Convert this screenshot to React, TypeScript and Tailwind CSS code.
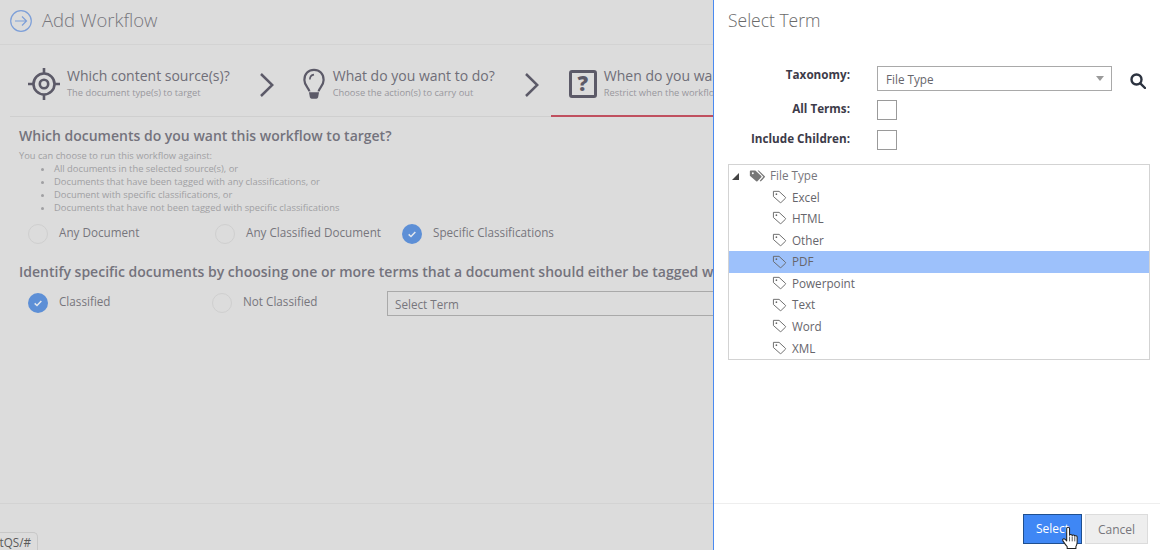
const font = "[font-family:'Open_Sans',sans-serif]";

function Tag({ className = "" }: { className?: string }) {
  return (
    <svg viewBox="0 0 16 16" className={className} fill="none" stroke="#666" strokeWidth="1">
      <path d="M1.5 2.5h6l6.8 6.3a.8.8 0 0 1 0 1.1l-4.6 4.4a.8.8 0 0 1-1.1 0L1.5 8z" strokeLinejoin="round" />
      <circle cx="4.7" cy="5.5" r="0.9" fill="#666" stroke="none" />
    </svg>
  );
}

function Tags({ className = "" }: { className?: string }) {
  return (
    <svg viewBox="0 0 20 16" className={className} fill="#777">
      <path d="M1 2.5a1 1 0 0 1 1-1h5.5l7 6.5a1 1 0 0 1 0 1.4l-4.6 4.8a1 1 0 0 1-1.4 0L1 7.800z" />
      <path d="M10 1.500h1.500l7 6.700a1 1 0 0 1 0 1.400l-4.700 5-1.200-1 4.300-4.700z" />
      <circle cx="4.500" cy="4.800" r="1.100" fill="#fff" />
    </svg>
  );
}

function Chevron() {
  return (
    <svg viewBox="0 0 14 24" className="w-[14px] h-[24px] shrink-0 mt-[3px]">
      <path d="M1 1l11.300 11L1 23" fill="none" stroke="#5c5a68" strokeWidth="2.500" />
    </svg>
  );
}

function Target() {
  return (
    <svg viewBox="0 0 32 32" className="w-[32px] h-[32px] shrink-0" fill="none" stroke="#5c5a68">
      <circle cx="16" cy="16" r="10.500" strokeWidth="2.600" />
      <circle cx="16" cy="16" r="4.200" strokeWidth="2.600" />
      <path d="M16 0v6M16 26v6M0 16h6M26 16h6" strokeWidth="2.600" />
    </svg>
  );
}

function Bulb() {
  return (
    <svg viewBox="0 0 24 34" className="w-[22px] h-[32px] shrink-0" fill="none" stroke="#5c5a68">
      <path d="M7 25c-.5-3.500-5.500-6-5.500-12.500C1.500 6 6 1.500 12 1.500S22.500 6 22.500 12.500C22.500 19 17.500 21.500 17 25" strokeWidth="2.400" />
      <path d="M7.500 12c0-3 1.800-4.800 4.500-5.200" strokeWidth="1.800" />
      <path d="M6.500 26h11l-1 5.500a2 2 0 0 1-2 1.500h-5a2 2 0 0 1-2-1.500z" fill="#5c5a68" stroke="none" />
    </svg>
  );
}

function Question() {
  return (
    <div className="w-[28px] h-[28px] shrink-0 rounded-[3px] border-[3px] border-[#5c5a68] flex items-center justify-center text-[21px] font-extrabold leading-none text-[#5c5a68]">
      ?
    </div>
  );
}

function Step({ icon, title, sub, gap }: { icon: React.ReactNode; title: string; sub: string; gap: string }) {
  return (
    <div className={`flex items-center shrink-0 ${gap}`}>
      {icon}
      <div className="whitespace-nowrap -mt-[2px]">
        <div className="text-[14px] leading-[20px] text-[#6f6e78]">{title}</div>
        <div className="text-[9.300px] leading-[13px] text-[#98979d]">{sub}</div>
      </div>
    </div>
  );
}

function Radio({ on, label, className = "" }: { on?: boolean; label: string; className?: string }) {
  return (
    <div className={`flex items-start shrink-0 ${className}`}>
      {on ? (
        <div className="w-[20px] h-[20px] rounded-full bg-[#5d8fd6] flex items-center justify-center shrink-0">
          <svg viewBox="0 0 12 12" className="w-[10px] h-[10px]">
            <path d="M2 6.500l2.800 2.500L10 3.500" fill="none" stroke="#e4e8ee" strokeWidth="1.800" />
          </svg>
        </div>
      ) : (
        <div className="w-[20px] h-[20px] rounded-full border border-[#cfcfcf] shrink-0" />
      )}
      <span className="ml-[11px] -mt-[1px] text-[11.700px] leading-[18px] text-[#77767c] whitespace-nowrap">{label}</span>
    </div>
  );
}

const terms = ["Excel", "HTML", "Other", "PDF", "Powerpoint", "Text", "Word", "XML"];

export default function App() {
  return (
    <div className={`${font} relative flex w-[1160px] h-[550px] overflow-hidden bg-white`}>
      <div className="w-[714px] h-full shrink-0 overflow-hidden bg-[#dcdcdc] border-r border-r-[#4a8af0] flex flex-col">
        <div className="h-[45px] shrink-0 border-b border-[#d3d3d3] flex items-center pl-[10px] pb-[4px] gap-[10px]">
          <svg viewBox="0 0 22 22" className="w-[22px] h-[22px] shrink-0 mt-[2px]" fill="none" stroke="#7d9fd8" strokeWidth="1.200">
            <circle cx="11" cy="11" r="10.300" />
            <path d="M5 11h11.500M12 6.500l4.500 4.500-4.500 4.500" />
          </svg>
          <span className="text-[18.500px] font-light text-[#77767c] whitespace-nowrap">Add Workflow</span>
        </div>

        <div className="h-[72px] shrink-0 border-b border-[#cfcfcf] ml-[10px] flex items-center pl-[18px] pt-[6px] relative">
          <Step icon={<Target />} title="Which content source(s)?" sub="The document type(s) to target" gap="gap-[7px]" />
          <div className="ml-[30px] mr-[29px] flex"><Chevron /></div>
          <Step icon={<Bulb />} title="What do you want to do?" sub="Choose the action(s) to carry out" gap="gap-[8px]" />
          <div className="ml-[30px] mr-[30px] flex"><Chevron /></div>
          <Step icon={<Question />} title="When do you want to run?" sub="Restrict when the workflow runs" gap="gap-[7px]" />
          <div className="absolute left-[541px] w-[172px] bottom-[-1px] h-[2px] bg-[#c0505f]" />
        </div>

        <div className="pl-[19px] pt-[9px]">
          <h2 className="text-[14px] leading-[20px] font-semibold text-[#74737d] whitespace-nowrap">
            Which documents do you want this workflow to target?
          </h2>
          <p className="mt-[3px] text-[9.300px] leading-[13px] text-[#a0a0a3] whitespace-nowrap">You can choose to run this workflow against:</p>
          <ul className="list-disc pl-[35px] text-[9.370px] leading-[13px] text-[#a0a0a3] whitespace-nowrap">
            <li>All documents in the selected source(s), or</li>
            <li>Documents that have been tagged with any classifications, or</li>
            <li>Document with specific classifications, or</li>
            <li>Documents that have not been tagged with specific classifications</li>
          </ul>
          <div className="flex pl-[9px] mt-[9.500px]">
            <Radio label="Any Document" className="w-[187px]" />
            <Radio label="Any Classified Document" className="w-[187px]" />
            <Radio on label="Specific Classifications" />
          </div>
          <h2 className="mt-[18.500px] text-[14px] leading-[20px] font-semibold text-[#74737d] whitespace-nowrap">
            Identify specific documents by choosing one or more terms that a document should either be tagged with or not
          </h2>
          <div className="flex pl-[9px] mt-[11px] items-start">
            <Radio on label="Classified" className="w-[184px]" />
            <Radio label="Not Classified" className="w-[175px]" />
            <div className="h-[25px] w-[400px] shrink-0 -mt-[2px] border border-[#a9a9a9] pl-[7px] text-[11.700px] leading-[24px] text-[#77767c]">
              Select Term
            </div>
          </div>
        </div>

        <div className="mt-auto h-[47px] shrink-0 border-t border-[#d3d3d3]" />
      </div>

      <div className="flex-1 flex flex-col bg-white">
        <div className="h-[41px] shrink-0 pl-[14px] flex items-center text-[17.500px] font-light text-[#6a6a6a]">Select Term</div>

        <div className="pl-[14px] pt-[25px] pr-[10px]">
          <div className="flex items-center">
            <div className="w-[122px] text-right text-[11.700px] font-bold leading-[18px] text-[#3d3b49] -mt-[9px]">Taxonomy:</div>
            <div className="ml-[27px] w-[235px] h-[25px] border border-[#a9a9a9] pl-[8px] pr-[7px] pt-[3px] flex items-center justify-between text-[11.700px] text-[#66656b]">
              File Type
              <span className="w-0 h-0 -mt-[3px] border-x-[4px] border-x-transparent border-t-[5px] border-t-[#9a9a9a]" />
            </div>
            <svg viewBox="0 0 16 16" className="ml-[18px] mt-[4px] w-[16px] h-[16px]" fill="none" stroke="#2c3340" strokeWidth="2.400">
              <circle cx="6.500" cy="6.500" r="5" />
              <path d="M10.300 10.300L15 15" strokeLinecap="round" />
            </svg>
          </div>
          <div className="flex items-start mt-[9px]">
            <div className="w-[122px] -mt-[1px] text-right text-[11.700px] font-bold leading-[18px] text-[#3d3b49]">All Terms:</div>
            <div className="ml-[27px] w-[20px] h-[20px] border border-[#9a9a9a]" />
          </div>
          <div className="flex items-start mt-[10px]">
            <div className="w-[122px] -mt-[1px] text-right text-[11.700px] font-bold leading-[18px] text-[#3d3b49]">Include Children:</div>
            <div className="ml-[27px] w-[20px] h-[20px] border border-[#9a9a9a]" />
          </div>

          <div className="mt-[14px] h-[196px] border border-[#d3d3d3] py-[1px] text-[11.700px] text-[#66656b]">
            <div className="h-[20.500px] flex items-center">
              <span className="ml-[3px] w-0 h-0 border-l-[7px] border-l-transparent border-b-[7px] border-b-[#444]" />
              <Tags className="ml-[10px] w-[17px] h-[14px]" />
              <span className="ml-[4px] text-[#77767c]">File Type</span>
            </div>
            {terms.map((t) => (
              <div key={t} className={`h-[21.600px] flex items-center pl-[43px] gap-[5px] ${t === "PDF" ? "bg-[#9dc1fb]" : ""}`}>
                <Tag className="w-[15px] h-[15px] -mt-[2px]" />
                <span>{t}</span>
              </div>
            ))}
          </div>
        </div>

        <div className="mt-auto h-[47px] border-t border-[#eeeeee] flex items-start justify-end pt-[10px] pr-[12px] gap-[3px]">
          <button className="w-[59px] h-[30px] bg-[#3f87f5] border border-[#1f4f8f] text-white text-[12px]">Select</button>
          <button className="w-[63px] h-[30px] pt-[1px] bg-[#eeeeee] border border-[#dcdcdc] text-[#77767c] text-[12px]">Cancel</button>
        </div>
      </div>

      <div className="absolute left-0 bottom-0 w-[38px] h-[18px] bg-[#dcdcdc] border-t border-r border-[#c8c8c8] rounded-tr-[5px] overflow-hidden flex justify-end pr-[6px] text-[11.700px] leading-[18px] text-[#5a5a5a]">
        tQS/#
      </div>

      <svg viewBox="0 0 20 26" className="absolute left-[1061px] top-[526px] w-[19px] h-[25px]">
        <path
          d="M6 2.500c0-1.800 3-1.800 3 0v7c0-1 2.800-1 2.800.5 0-1 2.700-1 2.700.6 0-.9 2.500-.8 2.500.8v5.600c0 2-.6 3-1.300 4.500v2H6.500v-2C5 20 3.500 17.800 2 15.500c-1-1.600 1-3 2.400-1.500L6 15.500z"
          fill="#fff"
          stroke="#222"
          strokeWidth="1.100"
          strokeLinejoin="round"
        />
        <path d="M9 11v5M11.800 11v5M14.500 11.500V16" stroke="#222" strokeWidth="0.800" fill="none" />
      </svg>
    </div>
  );
}
